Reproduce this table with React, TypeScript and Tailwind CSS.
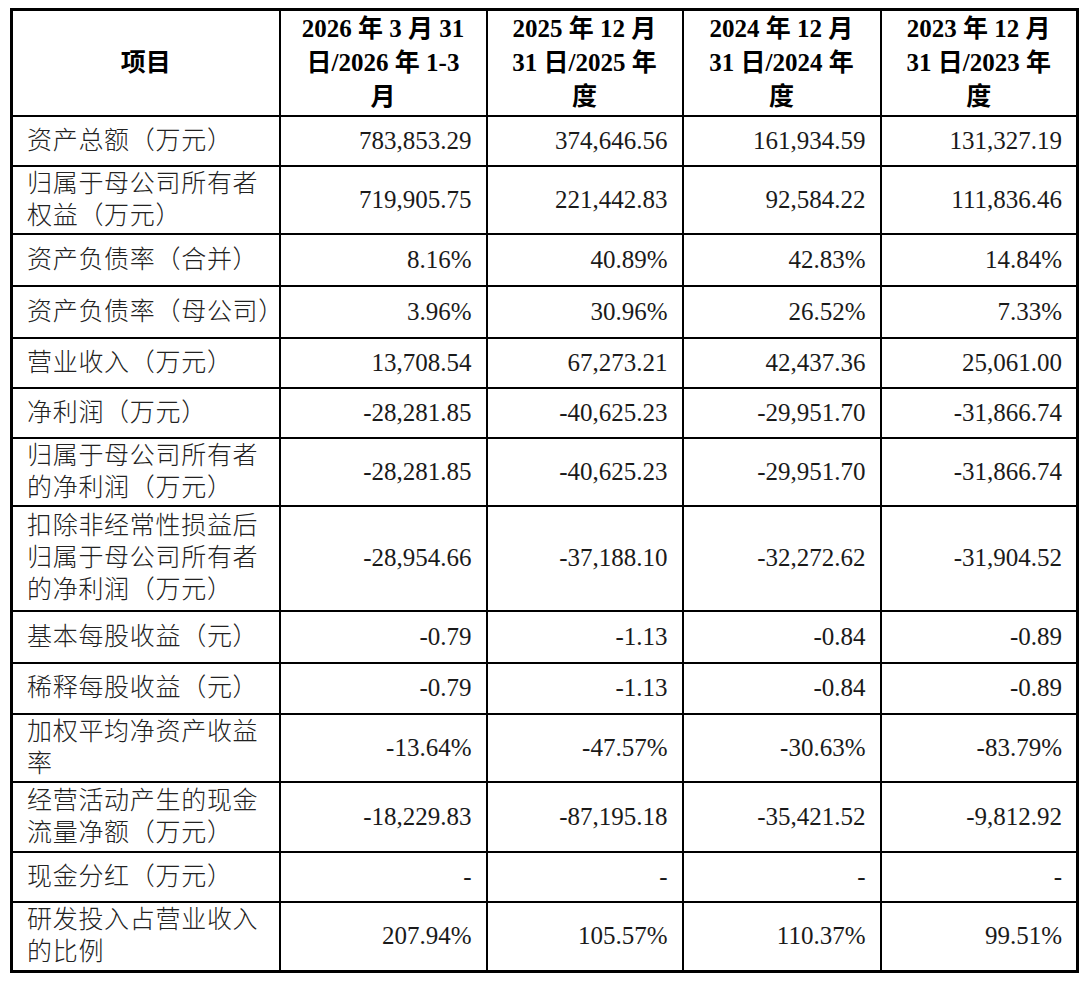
import React from 'react';

type Row = { label: string[]; h: number; values: string[] };

const headers: string[][] = [
  ['2026 年 3 月 31', '日/2026 年 1-3', '月'],
  ['2025 年 12 月', '31 日/2025 年', '度'],
  ['2024 年 12 月', '31 日/2024 年', '度'],
  ['2023 年 12 月', '31 日/2023 年', '度'],
];

const rows: Row[] = [
  { label: ['资产总额（万元）'], h: 50, values: ['783,853.29', '374,646.56', '161,934.59', '131,327.19'] },
  { label: ['归属于母公司所有者', '权益（万元）'], h: 68, values: ['719,905.75', '221,442.83', '92,584.22', '111,836.46'] },
  { label: ['资产负债率（合并）'], h: 52, values: ['8.16%', '40.89%', '42.83%', '14.84%'] },
  { label: ['资产负债率（母公司）'], h: 52, values: ['3.96%', '30.96%', '26.52%', '7.33%'] },
  { label: ['营业收入（万元）'], h: 50, values: ['13,708.54', '67,273.21', '42,437.36', '25,061.00'] },
  { label: ['净利润（万元）'], h: 50, values: ['-28,281.85', '-40,625.23', '-29,951.70', '-31,866.74'] },
  { label: ['归属于母公司所有者', '的净利润（万元）'], h: 68, values: ['-28,281.85', '-40,625.23', '-29,951.70', '-31,866.74'] },
  { label: ['扣除非经常性损益后', '归属于母公司所有者', '的净利润（万元）'], h: 105, values: ['-28,954.66', '-37,188.10', '-32,272.62', '-31,904.52'] },
  { label: ['基本每股收益（元）'], h: 52, values: ['-0.79', '-1.13', '-0.84', '-0.89'] },
  { label: ['稀释每股收益（元）'], h: 51, values: ['-0.79', '-1.13', '-0.84', '-0.89'] },
  { label: ['加权平均净资产收益', '率'], h: 68, values: ['-13.64%', '-47.57%', '-30.63%', '-83.79%'] },
  { label: ['经营活动产生的现金', '流量净额（万元）'], h: 70, values: ['-18,229.83', '-87,195.18', '-35,421.52', '-9,812.92'] },
  { label: ['现金分红（万元）'], h: 50, values: ['-', '-', '-', '-'] },
  { label: ['研发投入占营业收入', '的比例'], h: 70, values: ['207.94%', '105.57%', '110.37%', '99.51%'] },
];

const serif = { fontFamily: '"Liberation Serif", "Noto Sans CJK SC", serif' };

export default function App() {
  return (
    <div className="min-h-screen bg-white pt-[8px] pl-[10px] text-[#1a1a1a]" style={serif}>
      <table className="w-[1066px] table-fixed border-collapse border-[3px] border-black">
        <colgroup>
          <col className="w-[268px]" />
          <col className="w-[207px]" />
          <col className="w-[196px]" />
          <col className="w-[198px]" />
          <col className="w-[197px]" />
        </colgroup>
        <thead>
          <tr className="h-[106px]">
            <th className="border-2 border-black text-center align-middle text-[25px] font-bold leading-[34px] text-black">
              项目
            </th>
            {headers.map((lines, i) => (
              <th
                key={i}
                className="border-2 border-black px-1 text-center align-middle text-[25px] font-bold leading-[34px] text-black"
              >
                {lines.map((l, j) => (
                  <div key={j} className="whitespace-nowrap">{l}</div>
                ))}
              </th>
            ))}
          </tr>
        </thead>
        <tbody>
          {rows.map((r, i) => (
            <tr key={i} style={{ height: r.h }}>
              <td className="border-2 border-black pl-[14px] align-middle text-[25px] font-light leading-[32px] tracking-[0.7px] text-[#222]">
                {r.label.map((l, j) => (
                  <div key={j} className="whitespace-nowrap">{l}</div>
                ))}
              </td>
              {r.values.map((v, j) => (
                <td key={j} className="border-2 border-black pr-[14px] text-right align-middle text-[25px] leading-[32px]">
                  {v}
                </td>
              ))}
            </tr>
          ))}
        </tbody>
      </table>
    </div>
  );
}
